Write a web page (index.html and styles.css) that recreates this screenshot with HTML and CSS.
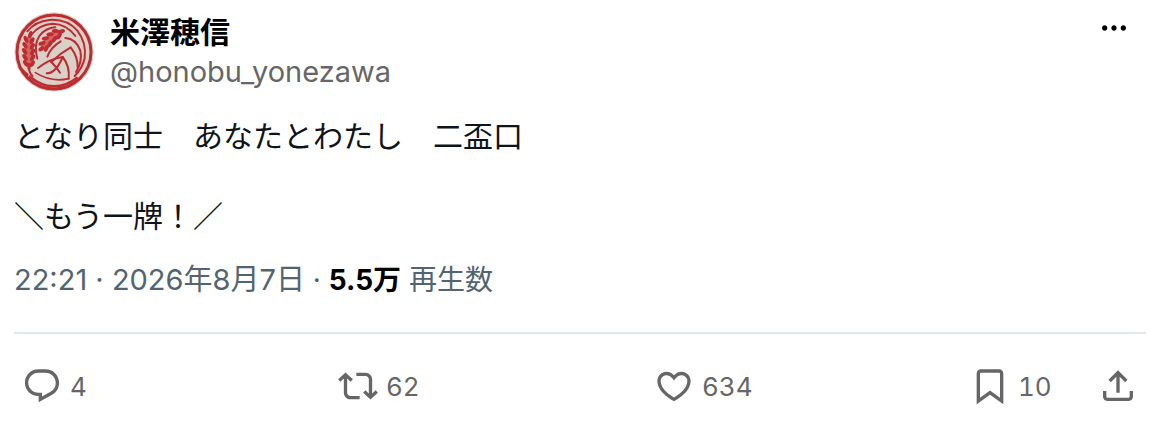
FILE: index.html
```html
<!DOCTYPE html>
<html lang="ja">
<head>
    <meta charset="UTF-8">
    <meta name="viewport" content="width=device-width, initial-scale=1.0">
    <title>米澤穂信</title>
    <link rel="stylesheet" href="styles.css">
</head>
<body>
    <article class="post">
        <header class="post-header">
            <svg class="avatar" viewBox="18 18 240 240" aria-hidden="true">
                <circle cx="138" cy="138" r="119" fill="#d9d0c8"/>
                <g fill="none" stroke="#bf2b30" stroke-linecap="round">
                    <circle cx="138" cy="138" r="111" stroke-width="9"/>
                    <path d="M66 212Q98 240 138 241Q178 240 206 216" stroke-width="8"/>
                    <path d="M36 186Q46 196 58 206" stroke-width="8"/>
                    <path d="M58 76Q82 46 124 42Q176 38 208 74Q236 110 230 156Q224 186 200 210" stroke-width="6"/>
                    <path d="M72 84Q94 56 134 53Q176 54 202 90" stroke-width="6"/>
                    <path d="M88 158Q76 118 94 90Q112 66 142 64" stroke-width="6"/>
                    <path d="M172 96Q204 98 217 134Q224 166 204 198" stroke-width="6"/>
                    <path d="M158 106Q128 124 118 152M63 186Q64 202 74 210" stroke-width="6"/>
                    <path d="M90 186Q126 158 164 153Q186 180 182 218" stroke-width="6"/>
                    <path d="M130 168Q156 142 188 124Q210 152 209 184" stroke-width="6"/>
                    <path d="M116 202Q144 202 164 153M130 168Q146 184 156 200" stroke-width="6"/>
                    <path d="M82 200Q130 230 182 218" stroke-width="5"/>
                </g>
                <path d="M62 84Q82 116 76 150Q74 174 64 188Q48 174 49 144Q48 112 62 84ZM168 73Q160 94 138 108Q116 136 100 134Q94 118 110 98Q134 74 168 73Z" fill="#d3675f"/>
                <g fill="#bf2b30">
                    <ellipse cx="67" cy="86" rx="6" ry="11" transform="rotate(15 67 86)"/>
                    <ellipse cx="54" cy="100" rx="6" ry="11" transform="rotate(-25 54 100)"/>
                    <ellipse cx="72" cy="104" rx="6" ry="11" transform="rotate(30 72 104)"/>
                    <ellipse cx="51" cy="118" rx="6" ry="11" transform="rotate(-30 51 118)"/>
                    <ellipse cx="73" cy="121" rx="6" ry="11" transform="rotate(30 73 121)"/>
                    <ellipse cx="50" cy="136" rx="6" ry="11" transform="rotate(-35 50 136)"/>
                    <ellipse cx="74" cy="138" rx="6" ry="11" transform="rotate(30 74 138)"/>
                    <ellipse cx="51" cy="154" rx="6" ry="11" transform="rotate(-35 51 154)"/>
                    <ellipse cx="74" cy="155" rx="6" ry="11" transform="rotate(30 74 155)"/>
                    <ellipse cx="53" cy="172" rx="6" ry="11" transform="rotate(-35 53 172)"/>
                    <ellipse cx="73" cy="173" rx="6" ry="11" transform="rotate(30 73 173)"/>
                    <ellipse cx="63" cy="182" rx="5" ry="11"/>
                    <ellipse cx="160" cy="76" rx="11" ry="6" transform="rotate(-15 160 76)"/>
                    <ellipse cx="142" cy="75" rx="11" ry="6" transform="rotate(-5 142 75)"/>
                    <ellipse cx="153" cy="90" rx="11" ry="6" transform="rotate(-55 153 90)"/>
                    <ellipse cx="126" cy="85" rx="11" ry="6" transform="rotate(-10 126 85)"/>
                    <ellipse cx="139" cy="100" rx="11" ry="6" transform="rotate(-60 139 100)"/>
                    <ellipse cx="112" cy="97" rx="11" ry="6" transform="rotate(-12 112 97)"/>
                    <ellipse cx="126" cy="113" rx="11" ry="6" transform="rotate(-65 126 113)"/>
                    <ellipse cx="102" cy="112" rx="11" ry="6" transform="rotate(-18 102 112)"/>
                    <ellipse cx="115" cy="127" rx="11" ry="6" transform="rotate(-70 115 127)"/>
                    <ellipse cx="100" cy="128" rx="10" ry="6" transform="rotate(-40 100 128)"/>
                </g>
            </svg>
            <div class="author">
                <a class="name" href="#">米澤穂信</a>
                <a class="handle" href="#">@honobu_yonezawa</a>
            </div>
            <button class="more" type="button" aria-label="もっと見る">
                <svg class="icon" viewBox="0 0 24 24"><path d="M3 12c0-1.1.9-2 2-2s2 .9 2 2-.9 2-2 2-2-.9-2-2zm9 2c1.1 0 2-.9 2-2s-.9-2-2-2-2 .9-2 2 .9 2 2 2zm7 0c1.1 0 2-.9 2-2s-.9-2-2-2-2 .9-2 2 .9 2 2 2z"/></svg>
            </button>
        </header>

        <div class="post-text">
            <p>となり同士　あなたとわたし　二盃口</p>
            <p>＼もう一牌！／</p>
        </div>

        <div class="meta">
            <a class="date" href="#"><time datetime="2026-08-07T22:21">22:21 · 2026年8月7日</time></a> · <strong>5.5万</strong> 再生数
        </div>

        <div class="actions">
            <button class="action" type="button" aria-label="返信 4">
                <svg class="icon" viewBox="0 0 24 24"><path d="M1.751 10c0-4.42 3.584-8 8.005-8h4.366c4.49 0 8.129 3.64 8.129 8.13 0 2.96-1.607 5.68-4.196 7.11l-8.054 4.46v-3.69h-.067c-4.49.1-8.183-3.51-8.183-8.01zm8.005-6c-3.317 0-6.005 2.69-6.005 6 0 3.37 2.77 6.08 6.138 6.01l.351-.01h1.761v2.3l5.087-2.81c1.951-1.08 3.163-3.13 3.163-5.36 0-3.39-2.744-6.13-6.129-6.13H9.756z"/></svg>
                <span>4</span>
            </button>
            <button class="action" type="button" aria-label="リポスト 62">
                <svg class="icon" viewBox="0 0 24 24"><path d="M4.5 3.88l4.432 4.14-1.364 1.46L5.5 7.55V16c0 1.1.896 2 2 2H13v2H7.5c-2.209 0-4-1.79-4-4V7.55L1.432 9.48.068 8.02 4.5 3.88zM16.5 6H11V4h5.5c2.209 0 4 1.79 4 4v8.45l2.068-1.93 1.364 1.46-4.432 4.14-4.432-4.14 1.364-1.46 2.068 1.93V8c0-1.1-.896-2-2-2z"/></svg>
                <span>62</span>
            </button>
            <button class="action" type="button" aria-label="いいね 634">
                <svg class="icon" viewBox="0 0 24 24"><path d="M16.697 5.5c-1.222-.06-2.679.51-3.89 2.16l-.805 1.09-.806-1.09C9.984 6.01 8.526 5.44 7.304 5.5c-1.243.07-2.349.78-2.91 1.91-.552 1.12-.633 2.78.479 4.82 1.074 1.97 3.257 4.27 7.129 6.61 3.87-2.34 6.052-4.64 7.126-6.61 1.111-2.04 1.03-3.7.477-4.82-.561-1.13-1.666-1.84-2.908-1.91zm4.187 7.69c-1.351 2.48-4.001 5.12-8.379 7.67l-.503.3-.504-.3c-4.379-2.55-7.029-5.19-8.382-7.67-1.36-2.5-1.41-4.86-.514-6.67.887-1.79 2.647-2.91 4.601-3.01 1.651-.09 3.368.56 4.798 2.01 1.429-1.45 3.146-2.1 4.796-2.01 1.954.1 3.714 1.22 4.601 3.01.896 1.81.846 4.17-.514 6.67z"/></svg>
                <span>634</span>
            </button>
            <button class="action bookmark" type="button" aria-label="ブックマーク 10">
                <svg class="icon" viewBox="0 0 24 24"><path d="M4 4.5C4 3.12 5.119 2 6.5 2h11C18.881 2 20 3.12 20 4.5v18.44l-8-5.71-8 5.71V4.5zM6.5 4c-.276 0-.5.22-.5.5v14.56l6-4.29 6 4.29V4.5c0-.28-.224-.5-.5-.5h-11z"/></svg>
                <span>10</span>
            </button>
            <button class="action share" type="button" aria-label="共有">
                <svg class="icon" viewBox="0 0 24 24"><path d="M12 2.59l5.7 5.7-1.41 1.42L13 6.41V16h-2V6.41l-3.3 3.3-1.41-1.42L12 2.59zM21 15l-.02 3.51c0 1.38-1.12 2.49-2.5 2.49H5.5C4.11 21 3 19.88 3 18.5V15h2v3.5c0 .28.22.5.5.5h12.98c.28 0 .5-.22.5-.5L19 15h2z"/></svg>
            </button>
        </div>
    </article>
</body>
</html>
```
FILE: styles.css
```css
body {
    margin: 0;
    background: #fff;
    color: #0f1419;
    font-family: Inter, "Noto Sans CJK JP", sans-serif;
}
a {
    color: inherit;
    text-decoration: none;
}
button {
    padding: 0;
    border: none;
    background: none;
    color: inherit;
    font: inherit;
    cursor: pointer;
}
.post {
    padding: 12px 18px 12px 14px;
}
.post-header {
    display: flex;
    align-items: flex-start;
    gap: 16px;
}
.avatar {
    width: 80px;
    height: 80px;
    border-radius: 50%;
    flex: none;
}
.author {
    display: flex;
    flex-direction: column;
    align-items: flex-start;
    flex: 1;
    line-height: 40px;
}
.name {
    color: #000;
    font-size: 30px;
    font-weight: bold;
}
.handle {
    color: #666;
    font-size: 29px;
}
.more {
    margin-right: 16px;
    color: #000;
}
.icon {
    display: block;
    width: 40px;
    height: 40px;
    fill: currentColor;
}
.more .icon {
    width: 32px;
    height: 32px;
}
.post-text {
    margin-top: 24px;
    font-size: 30px;
    line-height: 40px;
}
.post-text p {
    margin: 0 0 40px;
}
.meta {
    margin-top: -16px;
    padding-bottom: 32px;
    border-bottom: 2px solid #e3e8ea;
    color: #536471;
    font-size: 28px;
    line-height: 40px;
}
.meta .date {
    font-size: 29px;
}
.meta strong {
    color: #000;
}
.actions {
    display: flex;
    padding: 32px 8px 0;
    color: #666;
    font-size: 26px;
    font-variant-numeric: tabular-nums;
}
.action {
    display: flex;
    flex: 1;
    align-items: center;
    gap: 8px;
}
.action.bookmark {
    flex: 0 0 128px;
}
.action.share {
    flex: none;
}
```
